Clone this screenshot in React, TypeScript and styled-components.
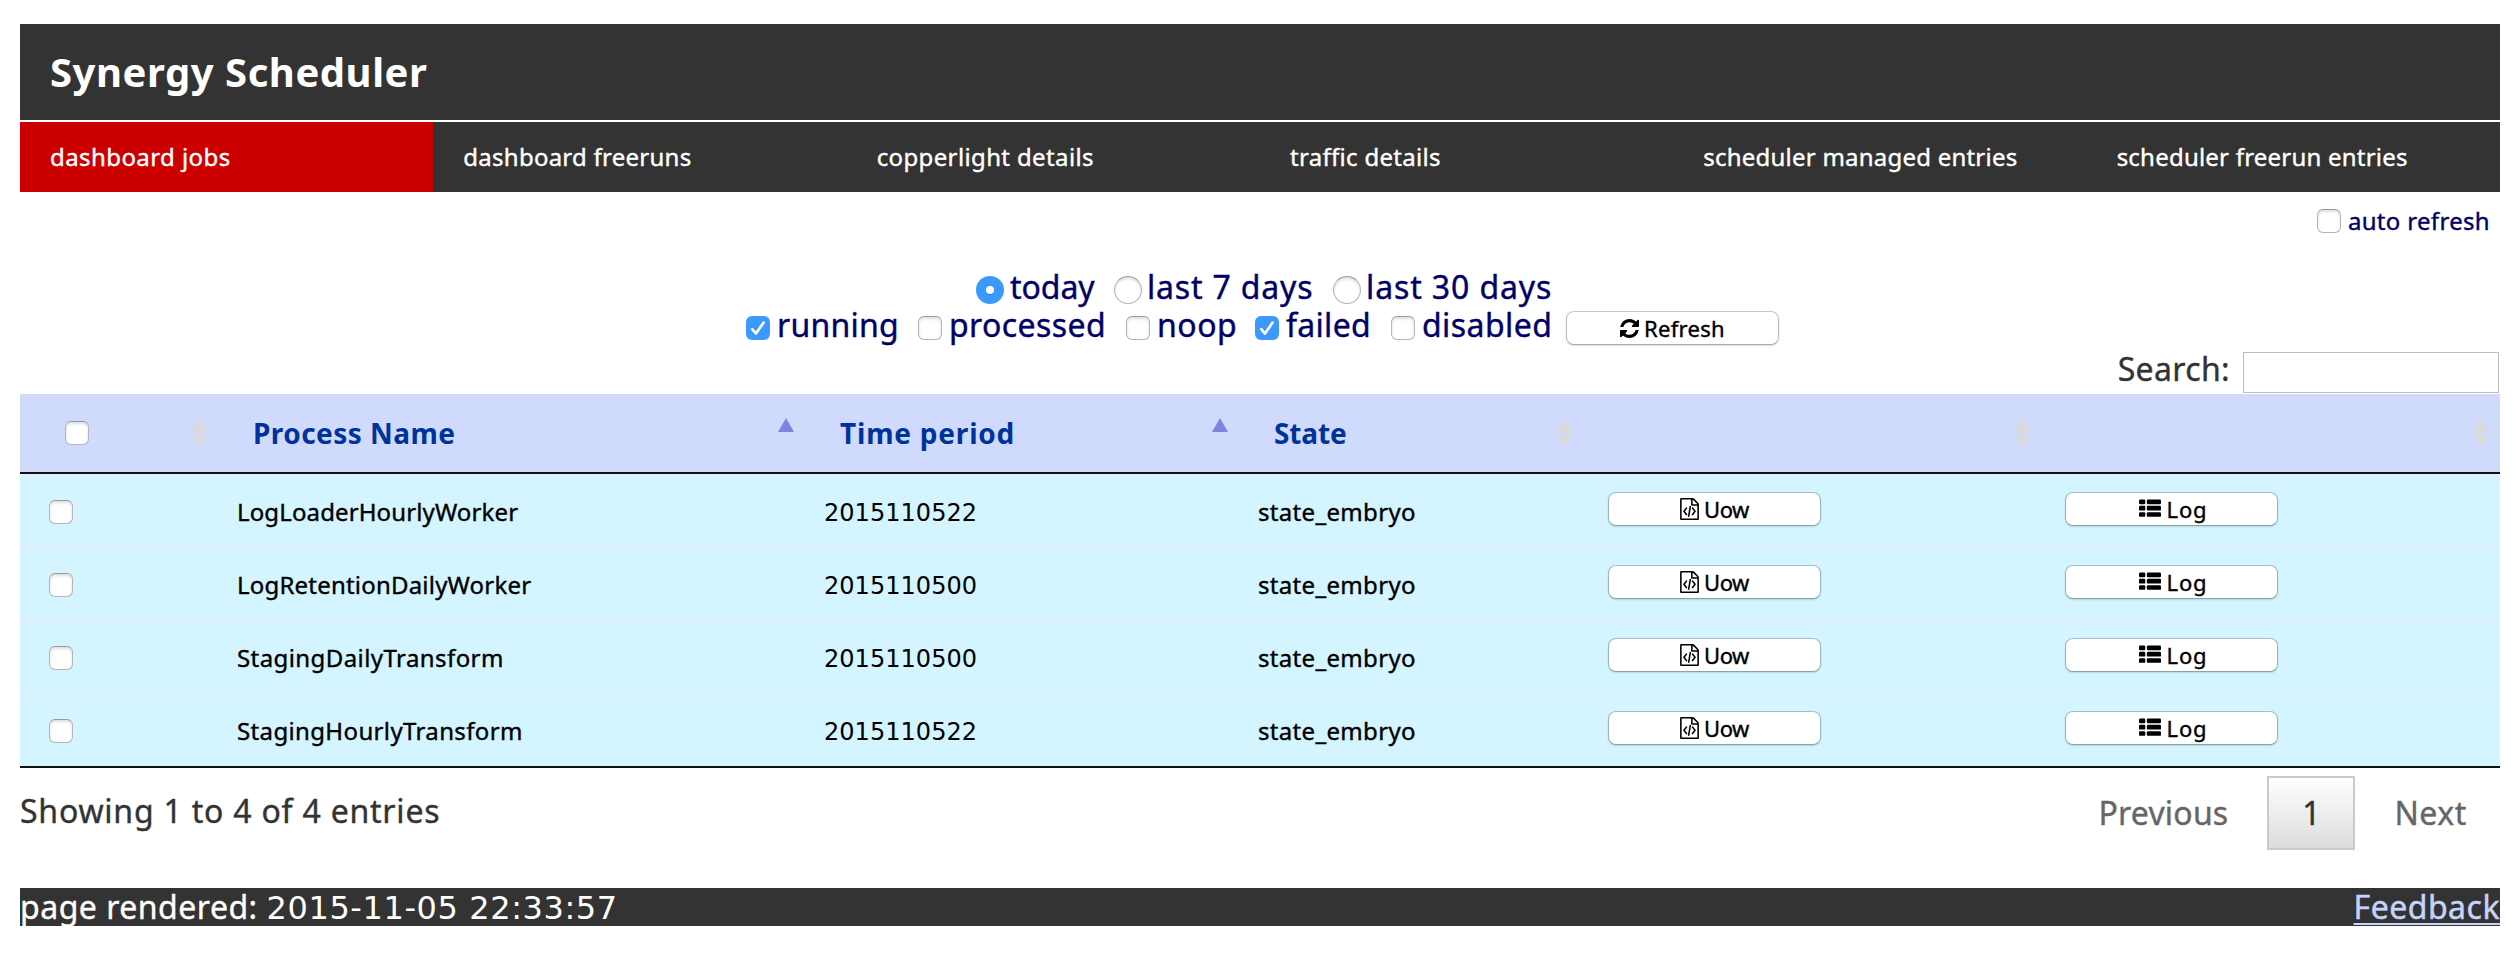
import React from "react";
import styled, { createGlobalStyle, css } from "styled-components";

const GlobalStyle = createGlobalStyle`
  * { box-sizing: border-box; }
  body {
    margin: 0;
    background: #fff;
    color: #333;
    font-family: "Noto Sans", "Open Sans", sans-serif;
    font-size: 32px;
    line-height: 38px;
  }
`;

const Page = styled.div`
  width: 2520px;
  height: 964px;
  padding: 24px 20px 0;
`;

const Text = styled.span<{ $spacing?: number }>`
  letter-spacing: ${(p) => p.$spacing ?? 0}px;
  white-space: nowrap;
  -webkit-text-stroke: 0.38px currentColor;
`;

const Digits = styled.span<{ $spacing: number }>`
  font-family: "DejaVu Sans", sans-serif;
  line-height: 1;
  letter-spacing: ${(p) => p.$spacing}px;
  white-space: nowrap;
`;

const Header = styled.header`
  display: flex;
  align-items: center;
  height: 96px;
  padding-left: 30px;
  background: #333;
`;

const Title = styled.h1`
  margin: 0;
  color: #fff;
  font-size: 40px;
  line-height: 48px;
  letter-spacing: 0.54px;
`;

const Nav = styled.nav`
  display: grid;
  grid-template-columns: repeat(6, 1fr);
  height: 70px;
  margin-top: 2px;
  background: #333;
`;

const NavItem = styled.a<{ $active?: boolean }>`
  display: flex;
  align-items: center;
  padding-left: 30px;
  background: ${(p) => (p.$active ? "#c00" : "#333")};
  color: #fff;
  font-size: 24px;
  line-height: 30px;
`;

const AutoRefresh = styled.label`
  display: flex;
  align-items: center;
  justify-content: flex-end;
  gap: 7px;
  height: 58px;
  padding-right: 10px;
  color: #006;
  font-size: 24px;
`;

const Filters = styled.form`
  display: flex;
  flex-direction: column;
  height: 94px;
  margin-top: 18px;
  margin-bottom: -1px;
  color: #006;
`;

const FilterRow = styled.div<{ $indent: number }>`
  display: flex;
  height: 38px;
  padding-left: ${(p) => p.$indent}px;
`;

const Option = styled.label<{ $width: number; $gap: number }>`
  display: flex;
  gap: ${(p) => p.$gap}px;
  width: ${(p) => p.$width}px;
`;

const Mark = styled.span<{ $checked?: boolean; $drop?: number }>`
  display: flex;
  flex: none;
  align-items: center;
  justify-content: center;
  width: 24px;
  height: 24px;
  margin-top: ${(p) => p.$drop ?? 0}px;
  border: 1.5px solid #b5b5b5;
  border-top-color: #999;
  border-radius: 6px;
  background: #fff;
  box-shadow: inset 0 2px 3px rgba(0, 0, 0, 0.13);
  ${(p) =>
    p.$checked &&
    css`
      border: 0;
      background: #3b99fc;
      box-shadow: none;
    `}
`;

const RadioMark = styled(Mark)`
  width: 28px;
  height: 28px;
  border-radius: 50%;
`;

const RadioDot = styled.span`
  width: 8px;
  height: 8px;
  border-radius: 50%;
  background: #fff;
  box-shadow: 0 1px 1px rgba(0, 0, 0, 0.2);
`;

const Button = styled.button`
  display: flex;
  align-items: center;
  justify-content: center;
  width: 213px;
  height: 34px;
  padding: 0;
  border: 1.5px solid rgba(0, 0, 0, 0.19);
  border-bottom-color: rgba(0, 0, 0, 0.24);
  border-radius: 8px;
  background: #fff;
  background-clip: padding-box;
  box-shadow: 0 1px 2px rgba(0, 0, 0, 0.14);
  color: #000;
  font: 22px/30px "Noto Sans", sans-serif;
  gap: 5px;
  svg { flex: none; }
`;

const RefreshButton = styled(Button)`
  margin-top: 5px;
`;

const LogButton = styled(Button)`
  gap: 6px;
  padding-left: 3px;
`;

const SearchBar = styled.label`
  display: flex;
  justify-content: flex-end;
  height: 33px;
  padding-right: 1px;
`;

const SearchInput = styled.input`
  width: 256px;
  height: 41px;
  margin: -9px 0 0 13px;
  border: 1.5px solid #bbb;
  background: #fff;
`;

const SearchLabel = styled(Text)`
  margin-top: -11px;
`;

const Table = styled.table`
  width: 2480px;
  table-layout: fixed;
  border-collapse: separate;
  border-spacing: 0;
  border-bottom: 2px solid #111;
`;

const HeadCell = styled.th`
  height: 80px;
  padding: 0;
  border-bottom: 2px solid #111;
  background: #d0dafd;
  color: #039;
  font-size: 28px;
  text-align: left;
`;

const HeadContent = styled.div`
  display: flex;
  align-items: center;
  justify-content: space-between;
  height: 78px;
  padding: 0 10px 0 35px;
`;

const HeadLabel = styled(Text)`
  -webkit-text-stroke: 0;
`;

const HeadCheck = styled.span`
  display: flex;
  padding-left: 10px;
`;

const Cell = styled.td<{ $first?: boolean }>`
  height: 73px;
  padding: 0 0 0 ${(p) => (p.$first ? 29 : 19)}px;
  border-top: 2px solid #e8edff;
  background: #d4f5ff;
  color: #000;
  font-size: 24px;
  line-height: 30px;
  vertical-align: middle;
`;

const ButtonCell = styled(Cell)`
  padding: 0 0 5px 24px;
`;

const TableFooter = styled.div`
  display: flex;
  justify-content: space-between;
  height: 120px;
`;

const Info = styled.div`
  padding-top: 24px;
`;

const Pager = styled.div`
  display: flex;
  align-items: center;
  height: 74px;
  margin-top: 8px;
  padding-right: 33px;
  color: #666;
`;

const CurrentPage = styled.span`
  display: flex;
  align-items: center;
  justify-content: center;
  width: 88px;
  height: 74px;
  margin: 0 39px 0 39px;
  border: 2px solid #cacaca;
  background: linear-gradient(#fff, #dcdcdc);
  color: #333;
`;

const Footer = styled.footer`
  display: flex;
  align-items: center;
  justify-content: space-between;
  height: 38px;
  background: #333;
  color: #fff;
`;

const FeedbackLink = styled.a`
  color: #c5d3ff;
  letter-spacing: 0.5px;
  -webkit-text-stroke: 0.45px currentColor;
  text-decoration: underline;
  text-decoration-thickness: 2px;
  text-underline-offset: 4px;
  text-decoration-skip-ink: none;
`;

const Check = () => (
  <svg width="24" height="24" viewBox="0 0 24 24" fill="none">
    <path d="M6.2 13.2 10 17.6 17.6 6.6" stroke="#fff" strokeWidth="2.6" strokeLinecap="round" strokeLinejoin="round" />
  </svg>
);

const RefreshIcon = () => (
  <svg width="19" height="19" viewBox="0 0 1536 1536">
    <path d="M1511 928q0 5-1 7-64 268-268 434.5t-478 166.5q-146 0-282.5-55t-243.5-157l-129 129q-19 19-45 19t-45-19-19-45v-448q0-26 19-45t45-19h448q26 0 45 19t19 45-19 45l-137 137q71 66 161 102t187 36q134 0 250-65t186-179q11-17 53-117 8-23 30-23h192q13 0 22.500 9.500t9.500 22.500zm25-800v448q0 26-19 45t-45 19h-448q-26 0-45-19t-19-45 19-45l138-138q-148-137-349-137-134 0-250 65t-186 179q-11 17-53 117-8 23-30 23h-199q-13 0-22.500-9.500t-9.500-22.500v-7q65-268 270-434.500t480-166.500q146 0 284 55.500t245 156.500l130-129q19-19 45-19t45 19 19 45z" />
  </svg>
);

const FileCodeIcon = () => (
  <svg width="19" height="22" viewBox="128 0 1536 1792">
    <path d="M1596 380q28 28 48 76t20 88v1152q0 40-28 68t-68 28h-1344q-40 0-68-28t-28-68v-1600q0-40 28-68t68-28h896q40 0 88 20t76 48zm-444-244v376h376q-10-29-22-41l-313-313q-12-12-41-22zm384 1528v-1024h-416q-40 0-68-28t-28-68v-416h-768v1536h1280zm-928-896q8-11 21-12.500t24 6.500l51 38q11 8 12.500 21t-6.500 24l-182 243 182 243q8 11 6.500 24t-12.500 21l-51 38q-11 8-24 6.500t-21-12.500l-226-301q-14-19 0-38zm802 301q14 19 0 38l-226 301q-8 11-21 12.500t-24-6.500l-51-38q-11-8-12.500-21t6.500-24l182-243-182-243q-8-11-6.500-24t12.500-21l51-38q11-8 24-6.500t21 12.500zm-620 461q-13-2-20.500-13t-5.500-24l138-831q2-13 13-20.500t24-5.500l63 10q13 2 20.500 13t5.500 24l-138 831q-2 13-13 20.500t-24 5.500z" />
  </svg>
);

const ListIcon = () => (
  <svg width="22" height="22" viewBox="0 0 1792 1792">
    {[128, 640, 1152].map((y) => (
      <React.Fragment key={y}>
        <rect x="0" y={y} width="512" height="384" rx="96" />
        <rect x="640" y={y} width="1152" height="384" rx="96" />
      </React.Fragment>
    ))}
  </svg>
);

const SortIcon = ({ ascending = false }: { ascending?: boolean }) => (
  <svg width="18" height="32" viewBox="0 0 18 32">
    <path d="M9 1 17 15H1Z" fill={ascending ? "#7f84e2" : "#dadada"} />
    {!ascending && <path d="M1 17H17L9 31Z" fill="#dadada" />}
  </svg>
);

const navItems: [string, number][] = [
  ["dashboard jobs", 0.42],
  ["dashboard freeruns", 0.25],
  ["copperlight details", 0.37],
  ["traffic details", 0.3],
  ["scheduler managed entries", 0.22],
  ["scheduler freerun entries", 0.22],
];

const periods = [
  { label: "today", width: 138, gap: 6, spacing: -0.05, checked: true },
  { label: "last 7 days", width: 219, gap: 5, spacing: 0.82 },
  { label: "last 30 days", width: 218, gap: 5, spacing: 0.88 },
];

const states = [
  { label: "running", width: 172, gap: 7, spacing: 0.22, checked: true },
  { label: "processed", width: 208, gap: 7, spacing: 0.4 },
  { label: "noop", width: 129, gap: 7, spacing: 0.5 },
  { label: "failed", width: 136, gap: 7, spacing: 0.3, checked: true },
  { label: "disabled", width: 175, gap: 7, spacing: 0.42 },
];

const headings = [
  { label: "Process Name", spacing: 0.45, ascending: true },
  { label: "Time period", spacing: 0.8, ascending: true },
  { label: "State", spacing: -0.13 },
  { label: "" },
  { label: "" },
];

const columnWidths = [198, 587, 434, 345, 457, 459];

const jobs = [
  { name: "LogLoaderHourlyWorker", spacing: 0.12, period: "2015110522" },
  { name: "LogRetentionDailyWorker", spacing: 0.2, period: "2015110500" },
  { name: "StagingDailyTransform", spacing: 0.42, period: "2015110500" },
  { name: "StagingHourlyTransform", spacing: 0.36, period: "2015110522" },
];

export default function App() {
  return (
    <Page>
      <GlobalStyle />
      <Header>
        <Title>Synergy Scheduler</Title>
      </Header>
      <Nav>
        {navItems.map(([label, spacing], i) => (
          <NavItem key={label} $active={i === 0}>
            <Text $spacing={spacing}>{label}</Text>
          </NavItem>
        ))}
      </Nav>
      <AutoRefresh>
        <Mark />
        <Text $spacing={0.32}>auto refresh</Text>
      </AutoRefresh>
      <Filters>
        <FilterRow $indent={956}>
          {periods.map((p) => (
            <Option key={p.label} $width={p.width} $gap={p.gap}>
              <RadioMark $checked={p.checked} $drop={8}>
                {p.checked && <RadioDot />}
              </RadioMark>
              <Text $spacing={p.spacing}>{p.label}</Text>
            </Option>
          ))}
        </FilterRow>
        <FilterRow $indent={726}>
          {states.map((s) => (
            <Option key={s.label} $width={s.width} $gap={s.gap}>
              <Mark $checked={s.checked} $drop={10}>
                {s.checked && <Check />}
              </Mark>
              <Text $spacing={s.spacing}>{s.label}</Text>
            </Option>
          ))}
          <RefreshButton type="button">
            <RefreshIcon />
            <Text $spacing={0.29}>Refresh</Text>
          </RefreshButton>
        </FilterRow>
      </Filters>
      <SearchBar>
        <SearchLabel $spacing={0.35}>Search:</SearchLabel>
        <SearchInput />
      </SearchBar>
      <Table>
        <colgroup>
          {columnWidths.map((w, i) => (
            <col key={i} width={w} />
          ))}
        </colgroup>
        <thead>
          <tr>
            <HeadCell>
              <HeadContent>
                <HeadCheck>
                  <Mark />
                </HeadCheck>
                <SortIcon />
              </HeadContent>
            </HeadCell>
            {headings.map((h, i) => (
              <HeadCell key={i}>
                <HeadContent>
                  <HeadLabel $spacing={h.spacing}>{h.label}</HeadLabel>
                  <SortIcon ascending={h.ascending} />
                </HeadContent>
              </HeadCell>
            ))}
          </tr>
        </thead>
        <tbody>
          {jobs.map((job) => (
            <tr key={job.name}>
              <Cell $first>
                <Mark />
              </Cell>
              <Cell>
                <Text $spacing={job.spacing}>{job.name}</Text>
              </Cell>
              <Cell>
                <Digits $spacing={0.04}>{job.period}</Digits>
              </Cell>
              <Cell>
                <Text $spacing={0.33}>state_embryo</Text>
              </Cell>
              <ButtonCell>
                <Button>
                  <FileCodeIcon />
                  <Text $spacing={-0.4}>Uow</Text>
                </Button>
              </ButtonCell>
              <ButtonCell>
                <LogButton>
                  <ListIcon />
                  <Text $spacing={0.8}>Log</Text>
                </LogButton>
              </ButtonCell>
            </tr>
          ))}
        </tbody>
      </Table>
      <TableFooter>
        <Info>
          <Text $spacing={0.78}>Showing 1 to 4 of 4 entries</Text>
        </Info>
        <Pager>
          <Text $spacing={0.2}>Previous</Text>
          <CurrentPage>
            <Text>1</Text>
          </CurrentPage>
          <Text $spacing={0.6}>Next</Text>
        </Pager>
      </TableFooter>
      <Footer>
        <div>
          <Text $spacing={0.5}>page rendered: </Text>
          <Digits $spacing={0.6}>2015-11-05 22:33:57</Digits>
        </div>
        <FeedbackLink>Feedback</FeedbackLink>
      </Footer>
    </Page>
  );
}
